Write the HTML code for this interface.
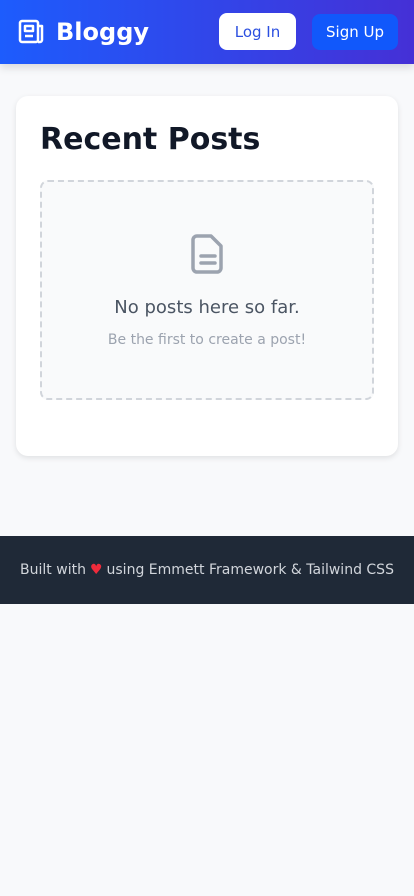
<!DOCTYPE html>
<html><head><meta charset="utf-8"><style>
*{margin:0;padding:0;box-sizing:border-box}
body{width:414px;height:896px;background:#f8f9fb;font-family:"DejaVu Sans","Liberation Sans",sans-serif;position:relative;overflow:hidden}
header{position:absolute;left:0;top:0;width:414px;height:64px;background:linear-gradient(90deg,#1d5cfd,#4530d6);box-shadow:0 4px 8px rgba(0,0,0,.12)}
.logo{position:absolute;left:18px;top:18px;display:flex;align-items:center;color:#fff;font-weight:bold;font-size:24px}
.logo svg{margin-right:10px}
.btn{position:absolute;top:13px;height:37px;border-radius:8px;font-size:15px;display:flex;align-items:center;justify-content:center}
.login{left:219px;width:77px;background:#fff;color:#2b4fe0}
.signup{left:312px;width:86px;top:14px;height:36px;background:#1158fb;color:#fff}
.card{position:absolute;left:16px;top:96px;width:382px;height:360px;background:#fff;border-radius:12px;box-shadow:0 2px 6px rgba(0,0,0,.1)}
h1{position:absolute;left:24px;top:26px;font-size:30px;font-weight:bold;color:#111827}
.empty{position:absolute;left:24px;top:84px;width:334px;height:220px;border:2px dashed #d1d5db;border-radius:8px;background:#f9fafb;text-align:center}
.empty svg{position:absolute;left:149px;top:52px}
.t1{position:absolute;left:0;right:0;top:115px;font-size:18px;color:#4b5563}
.t2{position:absolute;left:0;right:0;top:150px;font-size:14px;color:#9ca3af}
footer{position:absolute;left:0;top:536px;width:414px;height:68px;background:#1f2937;color:#d1d5db;font-size:14px;display:flex;align-items:center;justify-content:center}
footer span{color:#ef2b3b;margin:0 4px}
</style></head><body>
<header>
<div class="logo"><svg width="28" height="26" viewBox="0 0 28 26" fill="none" stroke="#fff" stroke-width="2.5" stroke-linejoin="round"><rect x="2" y="2" width="18" height="21" rx="2"/><path d="M20 7h4v14a2 2 0 0 1-2 2h-2"/><rect x="7" y="7" width="8" height="5"/><path d="M7 17h8"/></svg>Bloggy</div>
<div class="btn login">Log In</div>
<div class="btn signup">Sign Up</div>
</header>
<div class="card">
<h1>Recent Posts</h1>
<div class="empty">
<svg width="34" height="40" viewBox="0 0 34 40" fill="none" stroke="#9ca3af" stroke-width="3.5" stroke-linecap="round" stroke-linejoin="round"><path d="M6 2h14l10 10v22a4 4 0 0 1-4 4H6a4 4 0 0 1-4-4V6a4 4 0 0 1 4-4z"/><path d="M10 22h14M10 29h14"/></svg>
<div class="t1">No posts here so far.</div>
<div class="t2">Be the first to create a post!</div>
</div>
</div>
<footer>Built with<span>♥</span>using Emmett Framework &amp; Tailwind CSS</footer>
</body></html>
